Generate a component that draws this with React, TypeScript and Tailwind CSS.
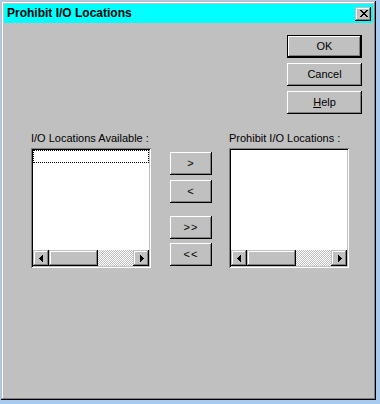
const raised =
  'shadow-[inset_-1px_-1px_0_#000,inset_1px_1px_0_#fff,inset_-2px_-2px_0_#808080]';
const frame =
  'shadow-[inset_-1px_-1px_0_#000,inset_1px_1px_0_#c0c0c0,inset_-2px_-2px_0_#808080,inset_2px_2px_0_#fff]';
const sunken =
  'shadow-[inset_1px_1px_0_#808080,inset_-1px_-1px_0_#fff,inset_2px_2px_0_#000,inset_-2px_-2px_0_#c0c0c0]';

function CloseGlyph() {
  const rows = [
    [0, 1, 6, 7],
    [1, 2, 5, 6],
    [2, 3, 4, 5],
    [3, 4],
    [2, 3, 4, 5],
    [1, 2, 5, 6],
    [0, 1, 6, 7],
  ];
  return (
    <svg width="8" height="7" viewBox="0 0 8 7" shapeRendering="crispEdges">
      {rows.map((cols, y) =>
        cols.map((x) => <rect key={`${x}-${y}`} x={x} y={y} width="1" height="1" fill="#000" />)
      )}
    </svg>
  );
}

function Arrow({ dir }: { dir: 'left' | 'right' }) {
  const points = dir === 'left' ? '0,3.5 4,-0.5 4,7.5' : '4,3.5 0,-0.5 0,7.5';
  return (
    <svg width="4" height="7" viewBox="0 0 4 7" shapeRendering="crispEdges">
      <polygon points={points} fill="#000" />
    </svg>
  );
}

function PushButton({ children, isDefault = false }: { children: React.ReactNode; isDefault?: boolean }) {
  return (
    <div
      className={`w-[75px] h-[23px] bg-[#c0c0c0] flex items-center justify-center text-[11px] ${raised} ${
        isDefault ? 'border border-black' : ''
      }`}
    >
      {children}
    </div>
  );
}

function MoveButton({ label }: { label: string }) {
  return (
    <div className={`w-[42px] h-[23px] bg-[#c0c0c0] flex items-center justify-center text-[11px] tracking-[1px] ${raised}`}>
      {label}
    </div>
  );
}

function ScrollBar({ thumb }: { thumb: number }) {
  return (
    <div className="h-[16px] flex">
      <div className={`w-[16px] h-[16px] bg-[#c0c0c0] flex items-center justify-center ${frame}`}>
        <Arrow dir="left" />
      </div>
      <div className={`h-[16px] bg-[#c0c0c0] ${frame}`} style={{ width: thumb }} />
      <div className="flex-1 h-[16px] bg-[repeating-conic-gradient(#c0c0c0_0_25%,#fff_0_50%)] bg-[length:2px_2px]" />
      <div className={`w-[16px] h-[16px] bg-[#c0c0c0] flex items-center justify-center pl-px ${frame}`}>
        <Arrow dir="right" />
      </div>
    </div>
  );
}

function ListBox({ label, focused = false }: { label: string; focused?: boolean }) {
  return (
    <div className="flex flex-col gap-[3px]">
      <div className="h-[13px] leading-[13px] text-[11px] whitespace-nowrap">{label}</div>
      <div className={`w-[120px] h-[120px] bg-white p-[2px] flex flex-col ${sunken}`}>
        <div className="flex-1">
          {focused && <div className="h-[13px] border border-dotted border-black" />}
        </div>
        <ScrollBar thumb={49} />
      </div>
    </div>
  );
}

export default function App() {
  return (
    <div className="w-[380px] h-[404px] bg-[#a6caf0] pl-px pt-px font-['Liberation_Sans',Arial,sans-serif] text-black">
      <div className={`w-[375px] h-[399px] bg-[#c0c0c0] p-[3px] flex flex-col ${frame}`}>
        <div className="h-[19px] bg-[#00ffff] flex items-center justify-between pl-[3px] pr-[2px]">
          <span className="font-bold text-[12px] leading-[19px]">Prohibit I/O Locations</span>
          <div className={`w-[16px] h-[14px] bg-[#c0c0c0] flex items-center justify-center pl-px ${frame}`}>
            <CloseGlyph />
          </div>
        </div>

        <div className="flex flex-col items-end gap-[5px] pt-[12px] pr-[11px]">
          <PushButton isDefault>OK</PushButton>
          <PushButton>Cancel</PushButton>
          <PushButton>
            <span>
              <span className="underline">H</span>elp
            </span>
          </PushButton>
        </div>

        <div className="flex items-start mt-[18px] pl-[27px]">
          <ListBox label="I/O Locations Available :" focused />
          <div className="flex flex-col mt-[20px] ml-[19px]">
            <MoveButton label=">" />
            <div className="mt-[5px]">
              <MoveButton label="<" />
            </div>
            <div className="mt-[13px]">
              <MoveButton label=">>" />
            </div>
            <div className="mt-[4px]">
              <MoveButton label="<<" />
            </div>
          </div>
          <div className="ml-[17px]">
            <ListBox label="Prohibit I/O Locations :" />
          </div>
        </div>
      </div>
    </div>
  );
}
